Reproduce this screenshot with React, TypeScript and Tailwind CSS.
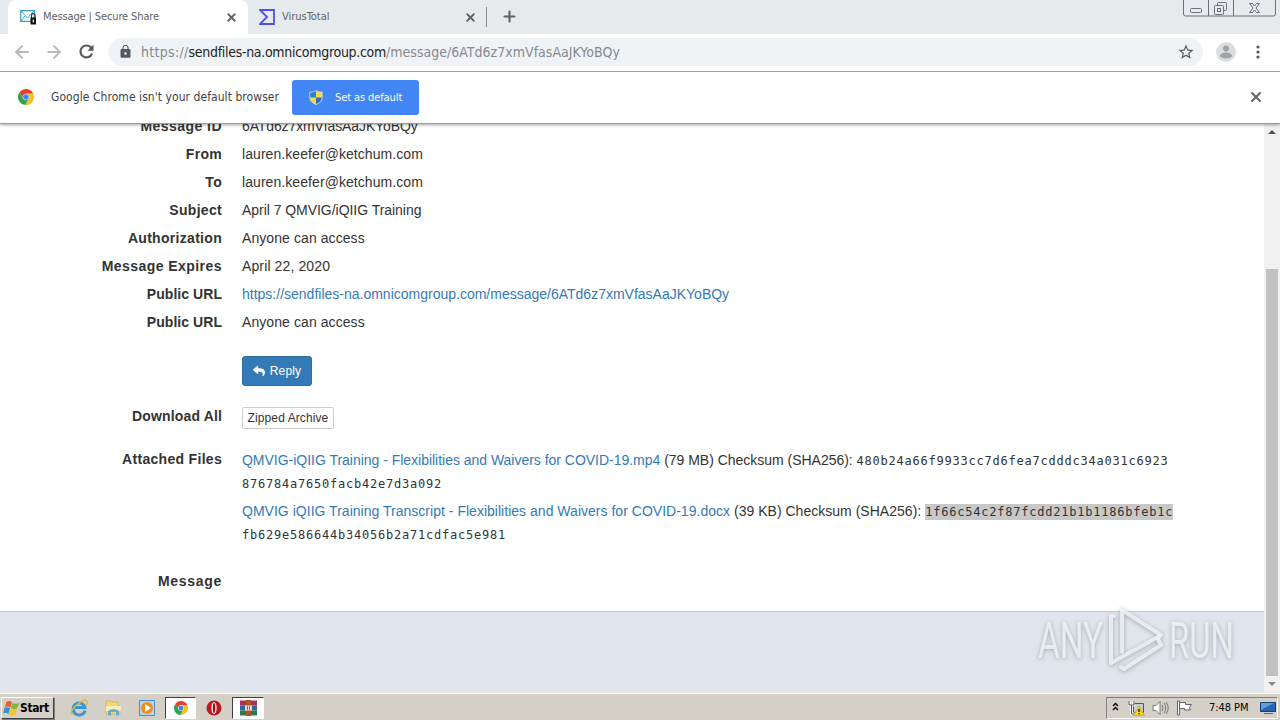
import type { ReactNode } from "react";
import { ArrowLeft, ArrowRight, Plus, X } from "lucide-react";
import { FaReply } from "react-icons/fa";
import { MdLock, MdStarBorder } from "react-icons/md";

function ChromeLogo({ size }: { size: number }) {
  const sector = "M24 14H45.8A24 24 0 0 0 4.400 10.100L15.340 29A10 10 0 0 1 24 14Z";
  return (
    <svg width={size} height={size} viewBox="0 0 48 48" className="shrink-0">
      <circle cx="24" cy="24" r="12" fill="#fff" />
      <path fill="#e8402f" d={sector} />
      <path fill="#fbc116" d={sector} transform="rotate(120 24 24)" />
      <path fill="#2fa24f" d={sector} transform="rotate(240 24 24)" />
      <circle cx="24" cy="24" r="8.500" fill="#4285f4" />
    </svg>
  );
}

function MailIcon() {
  return (
    <svg width="17" height="17" viewBox="0 0 17 17">
      <path d="M.7 1.700h13.600v10.600H.7z" fill="#fff" stroke="#3f9fc0" strokeWidth="1.200" />
      <path d="m1 2 6.500 7L14 2M1 12l4-5" fill="none" stroke="#3f9fc0" />
      <path d="M11.500 9V6.500a1.800 1.800 0 0 1 3.600 0V9" fill="none" stroke="#333" strokeWidth="1.200" />
      <path d="M10.500 8.500h5.500v7h-5.500z" fill="#111" />
      <path d="M12.700 10.500h1.200v3h-1.200z" fill="#fff" />
    </svg>
  );
}

function VirusTotalIcon() {
  return (
    <svg width="16" height="16" viewBox="0 0 16 16">
      <path d="M1 1h14v14H1l7-7z" fill="none" stroke="#4d50ee" strokeWidth="1.800" />
    </svg>
  );
}

function ShieldIcon() {
  return (
    <svg width="14" height="15" viewBox="0 0 14 15">
      <path d="M7 .5C5 2 3 2 .8 2.200v5c0 4 3 6 6.200 7.300V.5Z" fill="#2f7fd6" />
      <path d="M7 .5C9 2 11 2 13.200 2.200v5c0 4-3 6-6.200 7.300V.5Z" fill="#f6d64a" />
      <path d="M.8 7.500H7v7C3.500 13 1 11 .8 7.500Z" fill="#f6d64a" />
      <path d="M7 7.500h6.200c-.2 3.500-2.700 5.500-6.200 7Z" fill="#2f6fc0" />
      <path d="M7 .5C5 2 3 2 .8 2.200v5c0 4 3 6 6.200 7.300 3.200-1.300 6.200-3.300 6.200-7.300v-5C11 2 9 2 7 .5Z" fill="none" stroke="#d9e2e8" strokeWidth=".8" />
    </svg>
  );
}

function WindowControls() {
  return (
    <svg width="93" height="17" viewBox="0 0 93 17" fill="none" stroke="#6d7175">
      <path d="M.5 0v14q0 2 2 2h88q2 0 2-2V0M25.500 0v16M50.500 0v16" />
      <rect x="7.500" y="8.500" width="11" height="4" rx="1" />
      <rect x="34.500" y="2.500" width="9" height="8" rx="1" />
      <rect x="31.500" y="5.500" width="9" height="9" rx="1" fill="#e7eaed" />
      <rect x="34.500" y="8.500" width="3" height="3" />
      <path d="M66.500 3.500h3l2 2.500 2-2.500h3l-3.500 4.500 3.500 4.500h-3l-2-2.500-2 2.500h-3L70 8Z" />
    </svg>
  );
}

function TabStrip() {
  return (
    <div className="flex h-[34px] bg-[#e7eaed] text-[11px] text-[#5f6265]">
      <div className="ml-2 flex w-[240px] items-center rounded-t-lg bg-white pr-2 pl-3">
        <MailIcon />
        <span className="ml-[6px] flex-1 whitespace-nowrap tracking-[-0.12px]">Message | Secure Share</span>
        <X size={13} strokeWidth={3.4} className="mr-[2px]" />
      </div>
      <div className="flex w-[238px] items-center pr-2 pl-[11px]">
        <VirusTotalIcon />
        <span className="ml-[7px] flex-1 tracking-[-0.02px]">VirusTotal</span>
        <X size={13} strokeWidth={3.4} className="mr-[1px]" />
      </div>
      <div className="mt-[7px] h-5 w-px bg-[#8c9093]" />
      <Plus size={17} strokeWidth={3} className="mt-[8px] ml-[14px]" />
      <div className="mr-1 ml-auto">
        <WindowControls />
      </div>
    </div>
  );
}

function Toolbar() {
  return (
    <div className="flex h-[38px] items-center border-b border-[#a9aba9] bg-white pb-[2px]">
      <ArrowLeft size={20} strokeWidth={2.3} className="ml-[12px] text-[#b7b9bb]" />
      <ArrowRight size={20} strokeWidth={2.3} className="ml-[12px] text-[#b7b9bb]" />
      <svg width="21" height="21" viewBox="0 0 24 24" className="ml-[12px]">
        <path d="M18.300 14.300A6.800 6.800 0 1 1 16.800 7.200L18.500 9" fill="none" stroke="#55585c" strokeWidth="2.400" />
        <path d="M20 4v7h-7Z" fill="#55585c" />
      </svg>
      <div className="ml-[11px] flex h-7 w-[1095px] items-center rounded-full bg-[#f0f3f5] pr-[8px] pl-[10px]">
        <MdLock size={15} className="text-[#55585c]" />
        <div className="ml-2 flex-1 pt-px text-[14px] whitespace-nowrap text-[#85898d]">
          <span className="tracking-[0.3px]">https://</span>
          <span className="tracking-[-0.3px] text-[#1f2225]">sendfiles-na.omnicomgroup.com</span>
          <span className="tracking-[0.02px]">/message/6ATd6z7xmVfasAaJKYoBQy</span>
        </div>
        <MdStarBorder size={18} className="text-[#55585c]" />
      </div>
      <svg width="20" height="20" viewBox="0 0 20 20" className="ml-[13px]">
        <circle cx="10" cy="10" r="10" fill="#dcdddf" />
        <circle cx="10" cy="6.500" r="3" fill="#a0a2a4" />
        <ellipse cx="10" cy="13.500" rx="6" ry="3" fill="#a0a2a4" />
      </svg>
      <svg width="4" height="14" viewBox="0 0 4 14" fill="#55585c" className="ml-[20px]">
        <circle cx="2" cy="2" r="1.600" />
        <circle cx="2" cy="7" r="1.600" />
        <circle cx="2" cy="12" r="1.600" />
      </svg>
    </div>
  );
}

function DefaultBrowserBar() {
  return (
    <div className="relative z-10 flex h-[52px] items-center border-b border-[#9a9a9a] bg-white pb-px text-[#3f4245] shadow-[0_1px_3px_rgba(0,0,0,0.35)]">
      <div className="ml-[18px]">
        <ChromeLogo size={16} />
      </div>
      <span className="ml-[17px] w-[241px] text-[12px] whitespace-nowrap tracking-[0.06px]">
        Google Chrome isn't your default browser
      </span>
      <div className="mt-px flex h-[35px] w-[127px] items-center rounded-[3px] bg-[#4285f4] pl-[17px] text-[11px] text-white">
        <ShieldIcon />
        <span className="ml-3 whitespace-nowrap pt-px tracking-[-0.1px]">Set as default</span>
      </div>
      <X size={16} strokeWidth={3} className="mr-4 ml-auto text-[#606468]" />
    </div>
  );
}

const details = [
  { label: "Message ID", value: "6ATd6z7xmVfasAaJKYoBQy", tracking: "tracking-[-0.12px]" },
  { label: "From", value: "lauren.keefer@ketchum.com", tracking: "tracking-[0.07px]" },
  { label: "To", value: "lauren.keefer@ketchum.com", tracking: "tracking-[0.07px]" },
  { label: "Subject", value: "April 7 QMVIG/iQIIG Training", tracking: "tracking-[-0.04px]" },
  { label: "Authorization", value: "Anyone can access", tracking: "tracking-[0.08px]" },
  { label: "Message Expires", value: "April 22, 2020", tracking: "tracking-[0.12px]" },
  {
    label: "Public URL",
    value: "https://sendfiles-na.omnicomgroup.com/message/6ATd6z7xmVfasAaJKYoBQy",
    tracking: "text-[#337ab7] tracking-[0px]",
  },
  { label: "Public URL", value: "Anyone can access", tracking: "tracking-[0.08px]" },
];

const labelTracking: Record<string, string> = {
  "Message Expires": "tracking-[0.45px]",
  "Message ID": "tracking-[0.45px]",
  Message: "tracking-[0.7px]",
  "Public URL": "tracking-[0.05px]",
  "Download All": "tracking-[0.15px]",
};

const files = [
  {
    name: "QMVIG-iQIIG Training - Flexibilities and Waivers for COVID-19.mp4",
    size: "(79 MB)",
    hash: ["480b24a66f9933cc7d6fea7cdddc34a031c6923", "876784a7650facb42e7d3a092"],
    selected: false,
  },
  {
    name: "QMVIG iQIIG Training Transcript - Flexibilities and Waivers for COVID-19.docx",
    size: "(39 KB)",
    hash: ["1f66c54c2f87fcdd21b1b1186bfeb1c", "fb629e586644b34056b2a71cdfac5e981"],
    selected: true,
  },
];

function Row({ label, children }: { label: string; children?: ReactNode }) {
  return (
    <div className="flex">
      <div className="mr-5 w-[222px] shrink-0 text-right leading-7 font-bold">
        <span className={labelTracking[label] ?? "tracking-[0.3px]"}>{label}</span>
      </div>
      <div className="leading-7 whitespace-nowrap">{children}</div>
    </div>
  );
}

function Watermark() {
  return (
    <svg
      width="212"
      height="80"
      viewBox="0 0 212 80"
      className="absolute right-[38px] bottom-[9px] drop-shadow-[0_1px_2px_rgba(90,95,105,0.5)]"
    >
      <g fill="#f1f3f6" fillOpacity="0.85" fontFamily="Roboto" fontSize="50">
        <text x="8" y="55" textLength="65" lengthAdjust="spacingAndGlyphs">ANY</text>
        <text x="139" y="55" textLength="65" lengthAdjust="spacingAndGlyphs">RUN</text>
      </g>
      <g fill="none" stroke="#eef0f4" strokeOpacity="0.9" strokeWidth="4" strokeLinejoin="round" strokeLinecap="round">
        <path d="M84 13h-3v47l47-26" />
        <path d="M92 49V7l39 25-3 3" />
        <path d="m91 64 3 2 37-24-3-6" />
      </g>
    </svg>
  );
}

function Scrollbar() {
  return (
    <div className="flex w-4 shrink-0 flex-col items-center bg-[#f1f1f1]">
      <div className="mt-[6px] border-x-4 border-b-4 border-x-transparent border-b-[#505050]" />
      <div className="mt-[135px] h-[407px] w-3 bg-[#c1c1c1]" />
      <div className="mt-[6px] border-x-4 border-t-4 border-x-transparent border-t-[#8a8a8a]" />
    </div>
  );
}

function Page() {
  return (
    <div className="relative flex h-[568px] overflow-hidden">
      <div className="flex flex-1 flex-col bg-white font-['Liberation_Sans',sans-serif] text-[14px] text-[#333]">
        <div className="-mt-[12px]">
          {details.map((item, i) => (
            <Row key={i} label={item.label}>
              <span className={item.tracking}>{item.value}</span>
            </Row>
          ))}
        </div>
        <button className="mt-5 ml-[242px] flex h-[30px] w-[70px] items-center justify-center gap-[5px] rounded-[3px] border border-[#2e6da4] bg-[#337ab7] text-[12px] text-white">
          <FaReply size={12} />
          <span className="tracking-[0.15px]">Reply</span>
        </button>
        <div className="mt-4">
          <Row label="Download All">
            <button className="mt-[5px] block h-[22px] w-[92px] rounded-[2px] border border-[#ccc] text-[12px] leading-5 tracking-[0.1px]">
              Zipped Archive
            </button>
          </Row>
        </div>
        <div className="mt-[15px]">
          <Row label="Attached Files">
            <div className="mt-1 flex flex-col gap-[5px] leading-[23px]">
              {files.map((file) => (
                <div key={file.name} className={file.selected ? "tracking-[0.02px]" : "tracking-[-0.02px]"}>
                  <span className="text-[#337ab7]">{file.name}</span> {file.size} Checksum (SHA256):{" "}
                  <span className="font-['DejaVu_Sans_Mono',monospace] text-[12px] leading-none tracking-[0.776px]">
                    <span className={file.selected ? "bg-[#c8c8c8] py-[1px]" : ""}>{file.hash[0]}</span>
                    <br />
                    {file.hash[1]}
                  </span>
                </div>
              ))}
            </div>
          </Row>
        </div>
        <div className="mt-[21px]">
          <Row label="Message" />
        </div>
        <div className="mt-4 flex-1 border-t border-[#c6cad0] bg-[#e0e4ec]" />
      </div>
      <Scrollbar />
      <Watermark />
    </div>
  );
}

function StartButton() {
  return (
    <div className="mt-1 flex h-[22px] w-[53px] items-center border border-t-white border-r-[#404040] border-b-[#404040] border-l-white pl-[1px] text-[12px] font-bold tracking-[-0.4px] text-black shadow-[1px_1px_0_#808080]">
      <svg width="17" height="17" viewBox="0 0 16 16" className="shrink-0">
        <path d="M3 2q3-2 5.500 0L7 7.300Q4 5 1.500 7.300Z" fill="#e9602b" />
        <path d="M9 2.800q3 1.500 6.500-.3l-2.200 5.500Q10 9.500 7.500 7.700Z" fill="#79b843" />
        <path d="M1.300 7.800Q4 5.800 6.700 7.800L5 13.200Q3 11 0 12.500Z" fill="#3c8ed0" />
        <path d="M7.200 8.300q3 1.700 6 .3L11.500 14.300q-3 1.300-5.800-.7Z" fill="#f7c331" />
      </svg>
      Start
    </div>
  );
}

function Taskbar() {
  return (
    <div className="flex h-7 border-t border-[#e8e6e1] bg-[#d4d0c8] pl-[1px] shadow-[inset_0_1px_0_#fff]">
      <StartButton />
      <svg width="18" height="18" viewBox="0 0 18 18" fill="none" className="mt-[6px] ml-4">
        <path d="M15 11.500A6 6 0 1 1 15 8.500H5" stroke="#3798d8" strokeWidth="3" />
        <path d="M2 16Q-1 12 8 5t9-2q1 1-1 3" stroke="#e6b93c" strokeWidth="1.500" />
      </svg>
      <svg width="17" height="16" viewBox="0 0 17 16" className="mt-[7px] ml-[17px]">
        <path d="M1 3V1h5l1 1h6v4h2v8H1Z" fill="#efd778" stroke="#c9a73e" strokeWidth=".6" />
        <path d="M1 6h15v5H1Z" fill="#f9edb0" />
        <path d="M3 15.500V11q5-4 11 0v4.500h-3V12H6v3.500Z" fill="#65abdb" />
      </svg>
      <svg width="16" height="16" viewBox="0 0 16 16" className="mt-[7px] ml-[17px]">
        <path d="M.5.500h15v15H.5Z" fill="#b9d7ec" stroke="#4b8cc4" />
        <circle cx="8" cy="8" r="6" fill="#ef8b1c" />
        <path d="m6 4 6 4-6 4Z" fill="#fff" />
      </svg>
      <div className="mt-1 ml-[10px] flex h-[22px] w-[31px] items-center justify-center border border-t-[#404040] border-r-white border-b-white border-l-[#404040] bg-white">
        <ChromeLogo size={14} />
      </div>
      <svg width="16" height="16" viewBox="0 0 16 16" className="mt-[7px] ml-[10px]">
        <circle cx="8" cy="8" r="7.500" fill="#b91920" />
        <ellipse cx="8" cy="8" rx="2.700" ry="6" fill="#f5e7e7" />
        <ellipse cx="8" cy="8" rx="1.200" ry="5" fill="#9c1118" />
      </svg>
      <div className="mt-1 ml-[10px] flex h-[22px] w-[32px] items-center justify-center border border-t-[#404040] border-r-white border-b-white border-l-[#404040] bg-white">
        <svg width="17" height="16" viewBox="0 0 17 16">
          <path d="M0 .5h17v5H0z" fill="#a8324f" />
          <path d="M0 5.500h17v5H0z" fill="#355fa9" />
          <path d="M0 10.500h17v5H0z" fill="#2e7a42" />
          <path d="M6 0h5v16H6z" fill="#b3502e" />
          <path d="M5 5.500h7v5H5z" fill="#f0dcc0" />
          <path d="M7 6.500h1v3H7zM9 6.500h1v3H9z" fill="#8a4a28" />
        </svg>
      </div>
      <div className="mt-1 mr-[2px] ml-auto flex h-[22px] w-[172px] items-center border border-t-[#808080] border-r-white border-b-white border-l-[#808080] pl-[5px] text-[11px] text-black">
        <svg width="7" height="9" viewBox="0 0 7 9" fill="none" stroke="#000" strokeWidth="1.400" className="mb-1">
          <path d="m1 4 2.500-2.500L6 4M1 8l2.500-2.500L6 8" />
        </svg>
        <svg width="17" height="16" viewBox="0 0 17 16" className="ml-[9px]">
          <path d="M5.500 3.500h10v9h-10z" fill="#ccc" stroke="#555" />
          <path d="M1.500 1v4h4V1M3.500 5v9h4" fill="none" stroke="#fff" strokeWidth="2.500" />
          <path d="M1 1v4h5V1M3.500 5v9h3" fill="none" stroke="#555" />
          <path d="m11 6 5.500 9.500h-11Z" fill="#f4d821" stroke="#a68c10" strokeWidth=".5" />
          <path d="M11 9v3m0 1v1.300" stroke="#000" strokeWidth="1.300" />
        </svg>
        <svg width="17" height="16" viewBox="0 0 17 16" fill="none" stroke="#777" className="ml-[7px]">
          <path d="M1 5.500h3l4-4v13l-4-4H1Z" fill="#fff" />
          <path d="M10 5q2 3 0 6M12 3q3.500 5 0 10M14 2q4.500 6 0 12" />
        </svg>
        <svg width="17" height="16" viewBox="0 0 17 16" fill="#fff" stroke="#666" className="ml-[7px]">
          <path d="M1.500 1v14h2V1ZM3.500 2.500h6v2h6l-2 3 1 2.500h-6V8.500h-5Z" />
        </svg>
        <span className="ml-4 whitespace-nowrap tracking-[-0.05px]">7:48 PM</span>
        <svg width="16" height="14" viewBox="0 0 16 14" className="mr-px ml-auto">
          <path d="M.5 1.500h15v9H.5Z" fill="#2567b4" stroke="#173f75" />
          <path d="M1 2h13L1 9Z" fill="#5e9edb" />
          <path d="M4 12h9v1H4Z" fill="#666" />
        </svg>
      </div>
    </div>
  );
}

export default function App() {
  return (
    <div className="h-[720px] w-[1280px] overflow-hidden bg-white font-['DejaVu_Sans_Condensed','DejaVu_Sans',sans-serif]">
      <TabStrip />
      <Toolbar />
      <DefaultBrowserBar />
      <Page />
      <Taskbar />
    </div>
  );
}
